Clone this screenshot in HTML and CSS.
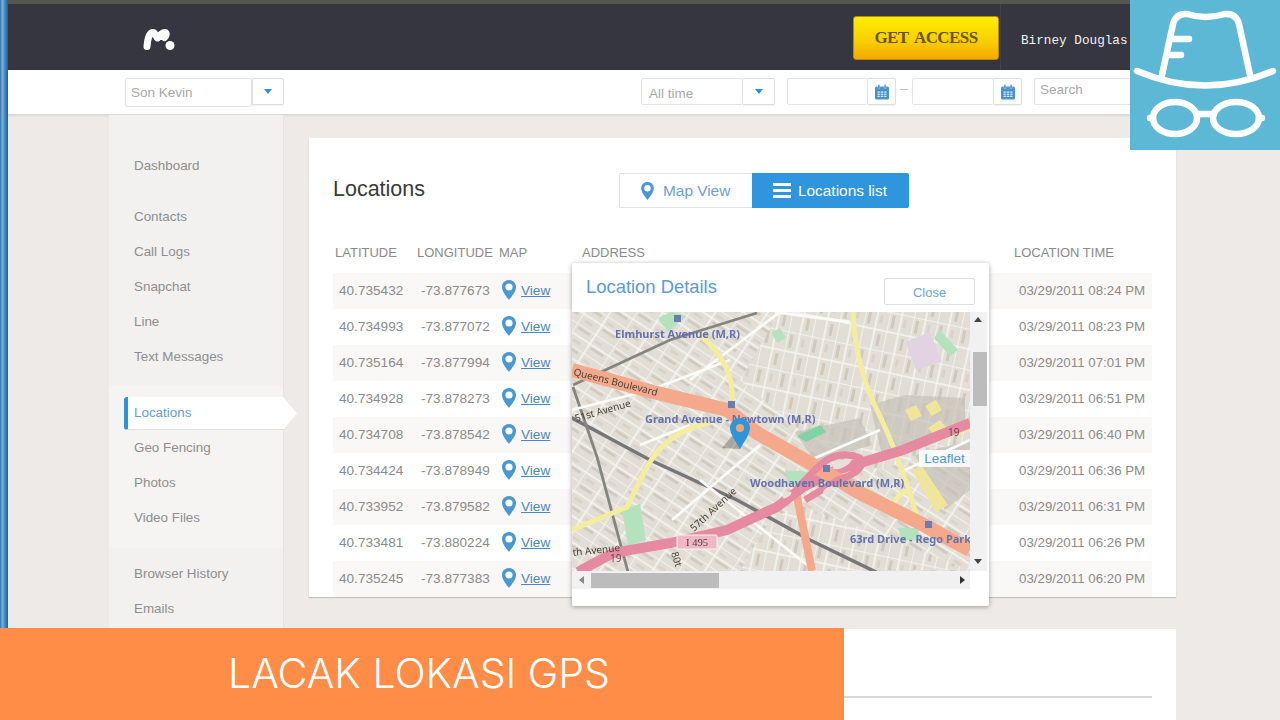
FILE: index.html
```html
<!DOCTYPE html>
<html lang="en">
<head>
<meta charset="utf-8">
<title>Locations</title>
<link rel="stylesheet" href="styles.css">
</head>
<body>
<svg class="defs" width="0" height="0" aria-hidden="true">
  <defs>
    <symbol id="pin" viewBox="0 0 14 20"><path class="pin-body" d="M7 0C3 0 0 3 0 7c0 4.500 4.500 9.500 7 13 2.500-3.500 7-8.500 7-13 0-4-3-7-7-7z"/><circle class="pin-hole" cx="7" cy="7" r="3.600"/></symbol>
    <symbol id="cal" viewBox="0 0 16 16"><rect class="cal-body" x="1" y="2.500" width="14" height="13" rx="1.500"/><rect class="cal-ring" x="4" y="0.500" width="1.800" height="4" rx="0.900"/><rect class="cal-ring" x="10.200" y="0.500" width="1.800" height="4" rx="0.900"/><path class="cal-grid" d="M3 7h10v6.500H3zM3 9.200h10M3 11.300h10M6.300 7v6.500M9.700 7v6.500"/></symbol>
    <pattern id="streets-a" width="44" height="22" patternUnits="userSpaceOnUse" patternTransform="rotate(33)">
      <rect width="44" height="22" class="m-base"/>
      <rect x="3" y="2.500" width="14" height="2.500" class="m-bld"/><rect x="25" y="13" width="15" height="2.500" class="m-bld"/><rect x="25" y="5" width="8" height="2.500" class="m-bld2"/><rect x="5" y="15" width="9" height="3" class="m-bld2"/>
      <path class="m-st" d="M0 0H44M0 11H44M0 0V22M22 0V22"/>
    </pattern>
    <pattern id="streets-b" width="24" height="40" patternUnits="userSpaceOnUse" patternTransform="rotate(12)">
      <rect width="24" height="40" class="m-base"/>
      <rect x="3" y="3" width="3" height="13" class="m-bld"/><rect x="16" y="24" width="3" height="12" class="m-bld"/><rect x="15" y="5" width="3" height="8" class="m-bld2"/>
      <path class="m-st" d="M0 0H24M0 20H24M0 0V40M12 0V40"/>
    </pattern>
  </defs>
</svg>
<div class="page">
  <div class="edge"></div>
  <div class="main">
    <div class="topstrip"></div>
    <header class="header">
      <svg class="logo" viewBox="0 0 32 23" aria-label="mSpy logo"><path class="logo-m" d="M4 18.500C4.500 12 6 5 9.500 4.500c3-.4 3.500 4.500 5 5.500 2-1 4-6 7.500-5.500 2.200.3 1 3.500-.5 5"/><circle class="logo-dot" cx="27" cy="17.500" r="4.500"/></svg>
      <a class="access">GET ACCESS</a>
      <div class="user">Birney Douglas</div>
    </header>
    <div class="toolbar">
      <div class="field field-son"><span>Son Kevin</span></div>
      <div class="addon addon-son"><i class="caret"></i></div>
      <div class="field field-time"><span>All time</span></div>
      <div class="addon addon-time"><i class="caret"></i></div>
      <div class="field field-date"></div>
      <div class="addon addon-cal"><svg class="cal"><use href="#cal"/></svg></div>
      <span class="dash"></span>
      <div class="field field-date"></div>
      <div class="addon addon-cal"><svg class="cal"><use href="#cal"/></svg></div>
      <div class="field field-search"><span>Search</span></div>
    </div>
    <div class="body">
      <nav class="sidebar">
        <div class="group group-a">
          <a class="item item-first">Dashboard</a>
          <a class="item">Contacts</a>
          <a class="item">Call Logs</a>
          <a class="item">Snapchat</a>
          <a class="item">Line</a>
          <a class="item">Text Messages</a>
        </div>
        <div class="group group-b">
          <a class="item active">Locations</a>
          <a class="item">Geo Fencing</a>
          <a class="item">Photos</a>
          <a class="item">Video Files</a>
        </div>
        <div class="group group-c">
          <a class="item">Browser History</a>
          <a class="item">Emails</a>
        </div>
      </nav>
      <main class="content">
        <section class="card">
          <div class="card-top">
            <h1>Locations</h1>
            <div class="toggle">
              <a class="tg tg-map"><svg class="tg-pin"><use href="#pin"/></svg>Map View</a>
              <a class="tg tg-list"><span class="bars"><i></i><i></i><i></i></span>Locations list</a>
            </div>
          </div>
          <div class="thead"><span>LATITUDE</span><span>LONGITUDE</span><span>MAP</span><span>ADDRESS</span><span>LOCATION TIME</span></div>
          <div class="row"><span>40.735432</span><span>-73.877673</span><svg class="pin"><use href="#pin"/></svg><a>View</a><time>03/29/2011 08:24 PM</time></div>
          <div class="row"><span>40.734993</span><span>-73.877072</span><svg class="pin"><use href="#pin"/></svg><a>View</a><time>03/29/2011 08:23 PM</time></div>
          <div class="row"><span>40.735164</span><span>-73.877994</span><svg class="pin"><use href="#pin"/></svg><a>View</a><time>03/29/2011 07:01 PM</time></div>
          <div class="row"><span>40.734928</span><span>-73.878273</span><svg class="pin"><use href="#pin"/></svg><a>View</a><time>03/29/2011 06:51 PM</time></div>
          <div class="row"><span>40.734708</span><span>-73.878542</span><svg class="pin"><use href="#pin"/></svg><a>View</a><time>03/29/2011 06:40 PM</time></div>
          <div class="row"><span>40.734424</span><span>-73.878949</span><svg class="pin"><use href="#pin"/></svg><a>View</a><time>03/29/2011 06:36 PM</time></div>
          <div class="row"><span>40.733952</span><span>-73.879582</span><svg class="pin"><use href="#pin"/></svg><a>View</a><time>03/29/2011 06:31 PM</time></div>
          <div class="row"><span>40.733481</span><span>-73.880224</span><svg class="pin"><use href="#pin"/></svg><a>View</a><time>03/29/2011 06:26 PM</time></div>
          <div class="row"><span>40.735245</span><span>-73.877383</span><svg class="pin"><use href="#pin"/></svg><a>View</a><time>03/29/2011 06:20 PM</time></div>
        </section>
        <section class="card2"><div class="rule"></div></section>
      </main>
    </div>
  </div>

  <div class="modal">
    <div class="modal-head"><h2>Location Details</h2><a class="close">Close</a></div>
    <div class="viewer">
      <svg class="map" viewBox="572 312 398 259">
        <rect x="572" y="312" width="398" height="259" fill="url(#streets-a)"/>
        <polygon points="780,312 970,312 970,440 880,470 800,430 740,380" fill="url(#streets-b)"/>
        <polygon points="800,505 970,570 800,571 740,571 770,520" fill="url(#streets-b)"/>
        <!-- land use -->
        <polygon class="m-gray" points="870,405 905,395 965,398 965,432 900,452 882,455"/>
        <polygon class="m-gray" points="795,432 860,418 872,445 815,462"/>
        <polygon class="m-gray" points="915,455 970,440 970,490 945,510"/>
        <polygon class="m-green" points="658,318 672,312 686,316 668,332"/>
        <polygon class="m-green" points="622,510 640,504 646,540 628,546"/>
        <polygon class="m-teal" points="797,436 820,425 826,432 806,442"/>
        <polygon class="m-green" points="785,470 810,472 806,486 788,484"/>
        <polygon class="m-green" points="940,330 958,350 950,356 934,338"/>
        <polygon class="m-green" points="898,528 918,528 920,540 902,540"/>
        <polygon class="m-green" points="772,332 780,328 786,338 776,342"/>
        <polygon class="m-purple" points="906,342 930,332 942,362 916,370"/>
        <polygon class="m-yellow" points="905,410 916,405 922,416 911,421"/>
        <polygon class="m-yellow" points="925,406 936,400 942,410 932,416"/>
        <polygon class="m-yellow" points="928,428 940,420 948,430 936,438"/>
        <polygon class="m-yellow" points="912,470 922,466 948,505 936,512"/>
        <!-- rail -->
        <path class="m-rail" d="M570 417L650 460L737 500L810 540L880 574"/>
        <path class="m-rail-thin" d="M573 385L670 340L757 313"/>
        <path class="m-rail-thin" d="M573 387L597 457L628 572"/>
        <!-- white arteries -->
        <path class="m-wide" d="M572 410L650 390L730 360M690 380L780 312M640 445L690 425M815 458L880 430M672 520L760 445M775 312L850 322M700 480L820 575M905 470L970 440"/>
        <!-- yellow roads -->
        <path class="m-yl" d="M700 335Q735 365 732 400"/>
        <path class="m-yl" d="M853 312Q855 365 877 410T917 517"/>
        <path class="m-yl" d="M572 530L627 507Q640 480 650 462Q670 430 710 423"/>
        <path class="m-yl" d="M890 455L970 428"/>
        <path class="m-yl" d="M892 510Q898 490 908 492"/>
        <!-- motorways -->
        <path class="m-salmon" d="M796 492L812 571"/>
        <path class="m-pink" d="M578 572L613 553L670 543L727 530L777 507L803 487L837 470L903 450L970 423"/>
        <path class="m-salmon m-salmon-w" d="M572 370L653 392L727 410L757 433L810 463L860 493L920 523L970 550"/>
        <path class="m-pink m-pink-s" d="M796 490L815 470Q835 448 860 458Q868 470 838 480L805 500"/>
        <ellipse class="m-hole" cx="842" cy="464" rx="10" ry="3.500" transform="rotate(-25 842 464)"/>
        <ellipse class="m-hole" cx="828" cy="490" rx="6" ry="2.500" transform="rotate(-35 828 490)"/>
        <ellipse class="m-hole" cx="787" cy="495" rx="5" ry="2" transform="rotate(-35 787 495)"/>
        <!-- stations -->
        <rect class="m-stn" x="674" y="315" width="7" height="7"/>
        <rect class="m-stn" x="728" y="401" width="7" height="7"/>
        <rect class="m-stn" x="823" y="465" width="7" height="7"/>
        <rect class="m-stn" x="925" y="521" width="7" height="7"/>
        <!-- labels -->
        <text class="m-lbl" x="615" y="338">Elmhurst Avenue (M,R)</text>
        <text class="m-lbl" x="645" y="423">Grand Avenue - Newtown (M,R)</text>
        <text class="m-lbl" x="750" y="487">Woodhaven Boulevard (M,R)</text>
        <text class="m-lbl" x="850" y="543">63rd Drive - Rego Park</text>
        <text class="m-road" transform="translate(573 375) rotate(14)">Queens Boulevard</text>
        <text class="m-road" transform="translate(576 422) rotate(-16)">51st Avenue</text>
        <text class="m-road" transform="translate(694 532) rotate(-43)">57th Avenue</text>
        <text class="m-road" transform="translate(573 556) rotate(-6)">th Avenue</text>
        <text class="m-road" transform="translate(671 553) rotate(72)">80t</text>
        <text class="m-road m-road-num" x="610" y="562">19</text>
        <text class="m-road m-road-num" x="948" y="436">19</text>
        <rect class="m-shield" x="677" y="535" width="40" height="14" rx="1"/>
        <text class="m-shield-t" x="697" y="546">I 495</text>
        <!-- marker -->
        <polygon class="m-shadow" points="740,449 722,448 732,436 744,440"/>
        <path class="m-pin" d="M740 418c-5.500 0-10 4.500-10 10 0 6 6 14 10 21 4-7 10-15 10-21 0-5.500-4.500-10-10-10z"/>
        <circle class="m-pin-c" cx="740" cy="428" r="4"/>
      </svg>
      <div class="leaflet">Leaflet</div>
      <div class="vbar"><i class="arr arr-up"></i><i class="vthumb"></i><i class="arr arr-dn"></i></div>
      <div class="hbar"><i class="arr arr-lf"></i><i class="hthumb"></i><i class="arr arr-rt"></i></div>
    </div>
  </div>

  <div class="hat">
    <svg viewBox="0 0 150 150" class="hat-svg" aria-label="Incognito icon">
      <path d="M7 71Q75 100 143 71"/>
      <path d="M32 75L43 24Q46 13 57 14Q75 20 95 14Q106 13 109 24L120 75"/>
      <path d="M41 39H59M39 55H51"/>
      <ellipse cx="45" cy="118" rx="22" ry="16"/>
      <ellipse cx="106" cy="118" rx="23" ry="16"/>
      <path d="M67 114H84M20 118H23M129 118H132"/>
    </svg>
  </div>

  <div class="banner">LACAK LOKASI GPS</div>
</div>
</body>
</html>
```
FILE: styles.css
```css
* { box-sizing: border-box; }
html, body { margin: 0; padding: 0; }
body { width: 1280px; height: 720px; overflow: hidden; background: #edeae7; font-family: "Liberation Sans", Arial, sans-serif; }
.defs { position: absolute; }
.page { position: relative; width: 1280px; height: 720px; overflow: hidden; display: flex; }
.edge { width: 8px; flex: none; background: linear-gradient(90deg, #2c73ad 0, #7fb0d6 30%, #3f8cc6 60%, #1f5f98 100%); }
.main { flex: 1; min-width: 0; display: flex; flex-direction: column; }
.topstrip { height: 4px; flex: none; background: #54564f; }

.header { height: 66px; flex: none; background: #363640; display: flex; align-items: center; padding-left: 135px; }
.logo { width: 32px; height: 23px; margin-top: 4px; flex: none; }
.logo-m { fill: none; stroke: #fff; stroke-width: 7; stroke-linecap: round; stroke-linejoin: round; }
.logo-dot { fill: #fff; }
.access { margin-left: 678px; width: 146px; height: 44px; margin-top: 2px; flex: none; display: flex; align-items: center; justify-content: center; border-radius: 3px; background: linear-gradient(#fdee00, #f9d000 55%, #f3a900); border: 1px solid #b98a10; font: 700 17px "Liberation Serif", serif; letter-spacing: -.6px; word-spacing: 3px; color: #6a5408; }
.user { margin-left: 1px; height: 66px; flex: none; border-left: 1px solid #42424c; padding: 4px 0 0 20px; font: 12.700px/66px "Liberation Mono", monospace; color: #f2f2f2; white-space: nowrap; }

.toolbar { height: 45px; flex: none; background: #fff; border-bottom: 1px solid #dcdad6; box-shadow: 0 1px 2px rgba(0,0,0,.08); display: flex; align-items: flex-start; padding: 8px 0 0 117px; overflow: hidden; position: relative; font-size: 13.500px; color: #a8a8a8; }
.field { height: 29px; background: #fff; border: 1px solid #e4e4e4; border-radius: 2px; flex: none; padding-left: 5px; line-height: 27px; }
.addon { height: 27px; border: 1px solid #dedede; border-left: 0; border-radius: 0 2px 2px 0; flex: none; display: flex; align-items: center; justify-content: center; box-shadow: 0 1px 1px rgba(0,0,0,.05); }
.field-son { width: 127px; padding-left: 5px; }
.addon-son { width: 32px; border-left: 1px solid #dedede; }
.field-time { width: 102px; height: 27px; margin-left: 357px; padding-left: 7px; line-height: 29px; }
.addon-time { width: 32px; }
.field-date { width: 81px; height: 27px; margin-left: 12px; }
.addon-cal { width: 28px; }
.addon-cal + .dash + .field-date { margin-left: 4px; width: 82px; }
.dash { width: 8px; height: 1px; background: #c4c4c4; margin: 11px 0 0 4px; flex: none; }
.field-search { width: 140px; height: 27px; margin-left: 12px; padding-left: 5px; line-height: 21px; }
.caret { width: 0; height: 0; border: 4px solid transparent; border-top: 5px solid #2e8fd6; border-bottom: 0; }
.cal { width: 16px; height: 16px; }
.cal-body { fill: #4a94cf; }
.cal-ring { fill: #3b82bd; stroke: #fff; stroke-width: .4; }
.cal-grid { fill: #d8e9f6; stroke: #3d86c2; stroke-width: .8; }

.body { flex: 1; min-height: 0; display: flex; padding-left: 101px; }
.sidebar { width: 175px; flex: none; background: #f2f1ef; border-right: 1px solid #e6e4e0; font-size: 13.400px; color: #8e8e8e; position: relative; }
.group-a { padding: 34px 0 11px; }
.group-b { padding: 10px 0 12px; background: #f5f4f2; }
.group-c { padding: 9px 0 0; }
.item { display: block; height: 35px; line-height: 34px; padding-left: 25px; white-space: nowrap; }
.item-first { margin-bottom: 16px; }
.active { width: 173px; height: 33px; margin: 1px 0 1px 15px; line-height: 32px; padding-left: 6px; background: #fff; border-left: 4px solid #3291d6; border-radius: 3px 0 0 3px; color: #5f9fd2; clip-path: polygon(0 0, 92% 0, 100% 50%, 92% 100%, 0 100%); border-bottom: 1px solid #dfdfdf; }

.content { width: 867px; margin-left: 25px; padding-top: 23px; flex: none; }
.card { height: 459px; background: #fff; padding: 35px 24px 0; box-shadow: 0 1px 1px rgba(0,0,0,.18); }
.card-top { display: flex; height: 35px; }
h1 { margin: 0; width: 286px; font-size: 21.500px; font-weight: 400; color: #3a3a3a; line-height: 33px; flex: none; }
.toggle { display: flex; font-size: 15.400px; }
.tg { display: flex; align-items: center; height: 35px; white-space: nowrap; }
.tg-map { width: 133px; border: 1px solid #e2e2e2; border-right: 0; padding-left: 21px; color: #6f9fcb; border-radius: 2px 0 0 2px; }
.tg-pin { width: 13px; height: 18px; margin-right: 9px; }
.tg-list { width: 157px; background: #2f95dc; color: #fff; padding-left: 21px; border-radius: 0 2px 2px 0; }
.bars { display: flex; flex-direction: column; gap: 3px; margin-right: 7px; }
.bars i { display: block; width: 18px; height: 3px; background: #fff; }
.thead { display: grid; grid-template-columns: 82px 82px 83px 432px 1fr; height: 20px; line-height: 20px; margin: 35px 0 10px; padding-left: 2px; font-size: 13px; color: #8a8a8a; white-space: nowrap; }
.row { display: grid; grid-template-columns: 82px 81px 19px 1fr 133px; height: 36px; padding: 0 0 2px 6px; align-items: center; font-size: 13.600px; color: #8b8b8b; white-space: nowrap; }
.row:nth-of-type(odd) { background: #faf8f6; }
.row time { font-size: 13.300px; }
.row a { color: #4a88bd; text-decoration: underline; }
.pin { width: 14px; height: 20px; }
.pin-body { fill: #4a97d1; }
.pin-hole { fill: #fff; }

.card2 { height: 92px; margin-top: 32px; background: #fff; padding: 67px 24px 0; }
.rule { height: 2px; background: #d8d8d6; }

.modal { position: absolute; left: 572px; top: 263px; width: 417px; height: 343px; background: #fff; box-shadow: 0 1px 5px rgba(0,0,0,.35); border-radius: 2px; }
.modal-head { height: 49px; display: flex; justify-content: space-between; align-items: flex-start; padding: 14px 14px 0 14px; }
h2 { margin: 0; font-size: 18.400px; font-weight: 400; color: #5c9bd2; line-height: 20px; }
.close { width: 91px; height: 27px; margin-top: 1px; border: 1px solid #dfdfdf; border-radius: 2px; text-align: center; line-height: 27px; font-size: 13px; color: #6ea4cf; }
.viewer { position: relative; width: 417px; height: 278px; overflow: hidden; }
.map { display: block; width: 398px; height: 259px; filter: blur(.55px); }
.leaflet { position: absolute; left: 347px; top: 138px; width: 51px; height: 17px; background: rgba(255,255,255,.85); color: #4f9ad0; font-size: 13.500px; line-height: 17px; text-align: center; }
.vbar { position: absolute; left: 398px; top: 0; width: 17px; height: 259px; background: #f1f1f1; }
.vthumb { position: absolute; left: 3px; top: 40px; width: 14px; height: 54px; background: #bcbcbc; }
.hbar { position: absolute; left: 0; top: 259px; width: 398px; height: 18px; background: #f1f1f1; }
.hthumb { position: absolute; left: 19px; top: 2px; width: 128px; height: 15px; background: #bcbcbc; }
.arr { position: absolute; width: 0; height: 0; border: 4px solid transparent; }
.arr-up { left: 4px; top: 5px; border-top: 0; border-bottom: 5px solid #444; }
.arr-dn { left: 4px; top: 247px; border-bottom: 0; border-top: 5px solid #444; }
.arr-lf { left: 7px; top: 5px; border-left: 0; border-right: 5px solid #888; }
.arr-rt { left: 388px; top: 5px; border-right: 0; border-left: 5px solid #333; }

.m-base { fill: #e2ded6; }
.m-bld { fill: #cfc8bc; }
.m-bld2 { fill: #d8d2c8; }
.m-st { stroke: #f7f6f3; stroke-width: 1.500; fill: none; }
.m-wide { stroke: #fafaf7; stroke-width: 2.800; fill: none; }
.m-green { fill: #b3e2bd; }
.m-teal { fill: #7fd3a6; }
.m-purple { fill: #e3d2e2; }
.m-gray { fill: #c6c1b8; fill-opacity: .7; }
.m-yellow { fill: #efe69c; }
.m-rail { stroke: #77777a; stroke-width: 3.500; fill: none; }
.m-rail-thin { stroke: #85857f; stroke-width: 2.800; fill: none; }
.m-yl { stroke: #f3ee9d; stroke-width: 5; fill: none; }
.m-pink { stroke: #e58aa0; stroke-width: 10; fill: none; }
.m-pink-s { stroke-width: 7; }
.m-salmon { stroke: #f5a98c; stroke-width: 8; fill: none; }
.m-salmon-w { stroke-width: 14; }
.m-hole { fill: #eadfda; }
.m-stn { fill: #6b7cae; }
.m-lbl { font: 700 11px "Noto Sans", "Open Sans", sans-serif; fill: #6372ae; }
.m-road { font: 400 10px "Noto Sans", "Open Sans", sans-serif; fill: #4a4238; }
.m-road-num { fill: #7a3f4a; }
.m-shield { fill: #eeb9c4; stroke: #f5f5f5; stroke-width: 1; }
.m-shield-t { font: 400 10.500px "Liberation Serif", serif; fill: #553a40; text-anchor: middle; }
.m-pin { fill: #2e95d8; }
.m-pin-c { fill: #f0a27c; }
.m-shadow { fill: rgba(60,60,60,.35); }

.hat { position: absolute; right: 0; top: 0; width: 150px; height: 150px; background: #5cb8d5; }
.hat-svg { display: block; width: 150px; height: 150px; fill: none; stroke: #fff; stroke-width: 6.500; stroke-linecap: round; stroke-linejoin: round; }

.banner { position: absolute; left: 0; bottom: 0; width: 844px; height: 92px; background: #ff8c47; color: #fff; padding-left: 228px; font: 300 41px/90px Inter, "Noto Sans", sans-serif; white-space: nowrap; }
```
